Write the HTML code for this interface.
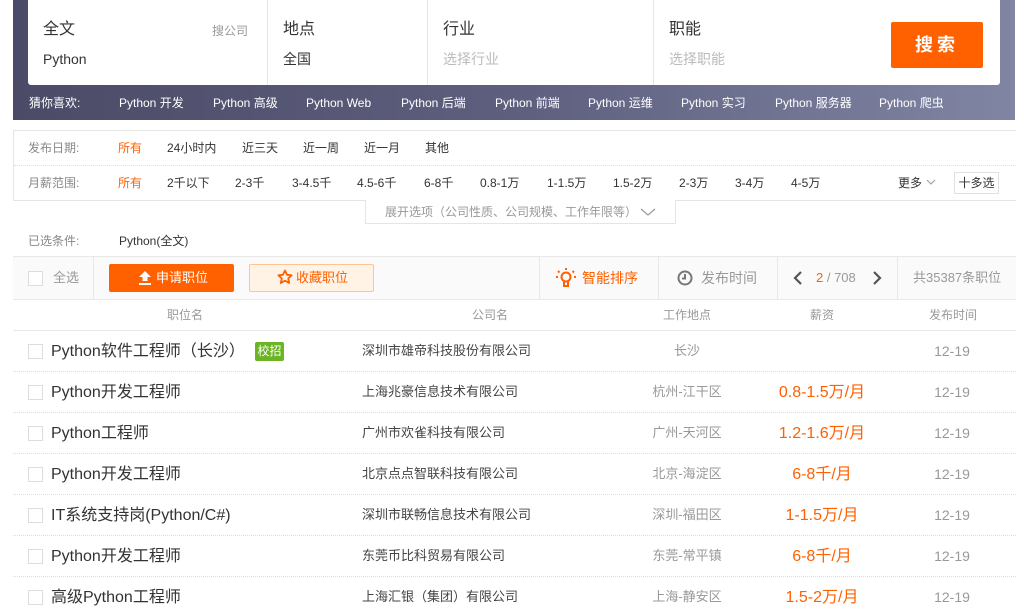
<!DOCTYPE html>
<html><head><meta charset="utf-8"><style>
*{margin:0;padding:0;box-sizing:border-box}
body{width:1024px;height:611px;overflow:hidden;background:#fff;position:relative;font-family:"Liberation Sans","Noto Sans CJK SC",sans-serif;color:#333}
.a{position:absolute;white-space:nowrap}
.hd{position:absolute;left:13px;top:0;width:1002px;height:120px;background:linear-gradient(90deg,#4b4b67 0%,#5e5f7e 50%,#8085a3 100%)}
.sb{position:absolute;left:28px;top:0;width:972px;height:85px;background:#fff;border-radius:0 0 3px 3px}
.vd{position:absolute;top:0;width:1px;height:85px;background:#e5e5e5}
.t1{font-size:16px;color:#333;line-height:20px}
.t2{font-size:14px;line-height:18px}
.rec{font-size:12px;color:#fff;line-height:16px;top:95px}
.f{font-size:12px;line-height:16px;color:#333}
.g{color:#888}
.o{color:#ff6000}
.cb{position:absolute;width:15px;height:15px;border:1px solid #ddd;background:#fff}
.n{font-size:16px;line-height:20px;color:#333}
.c{font-size:13px;color:#444;line-height:18px}
.loc{font-size:13px;color:#999;line-height:18px;text-align:center;width:120px}
.sal{font-size:16px;color:#ff6000;line-height:20px;text-align:center;width:140px}
.dt{font-size:14px;color:#999;line-height:18px;text-align:center;width:80px}
.dl{position:absolute;left:13px;width:1003px;border-top:1px dotted #ddd}
</style></head><body>
<div class="hd"></div>
<div class="sb">
<div class="vd" style="left:239px"></div><div class="vd" style="left:399px"></div><div class="vd" style="left:625px"></div>
</div>
<span class="a t1" style="left:43px;top:20px">全文</span>
<span class="a" style="left:212px;top:22px;font-size:12px;color:#999">搜公司</span>
<span class="a t2" style="left:43px;top:50px;color:#333">Python</span>
<span class="a t1" style="left:283px;top:20px">地点</span>
<span class="a t2" style="left:283px;top:50px;color:#333">全国</span>
<span class="a t1" style="left:443px;top:20px">行业</span>
<span class="a t2" style="left:443px;top:50px;color:#bbb">选择行业</span>
<span class="a t1" style="left:669px;top:20px">职能</span>
<span class="a t2" style="left:669px;top:50px;color:#bbb">选择职能</span>
<div class="a" style="left:891px;top:22px;width:92px;height:46px;background:#ff6000;border-radius:2px;color:#fff;font-size:18px;font-weight:bold;text-align:center;line-height:46px;letter-spacing:4px">搜索</div>
<span class="a rec" style="left:29px">猜你喜欢:</span>
<span class="a rec" style="left:119px">Python 开发</span>
<span class="a rec" style="left:213px">Python 高级</span>
<span class="a rec" style="left:306px">Python Web</span>
<span class="a rec" style="left:401px">Python 后端</span>
<span class="a rec" style="left:495px">Python 前端</span>
<span class="a rec" style="left:588px">Python 运维</span>
<span class="a rec" style="left:681px">Python 实习</span>
<span class="a rec" style="left:775px">Python 服务器</span>
<span class="a rec" style="left:879px">Python 爬虫</span>

<div class="a" style="left:13px;top:130px;width:1003px;height:71px;border:1px solid #e5e5e5;border-right:none"></div>
<div class="a" style="left:14px;top:165px;width:1002px;border-top:1px dotted #e0e0e0"></div>
<div class="a" style="left:365px;top:200px;width:311px;height:24px;border:1px solid #e5e5e5;border-top:none;background:#fff"></div>
<span class="a f" style="left:385px;top:204px;color:#999">展开选项（公司性质、公司规模、工作年限等）</span>
<svg class="a" style="left:640px;top:207px" width="16" height="10"><path d="M1 2l7 6 7-6" fill="none" stroke="#999" stroke-width="1.2"/></svg>
<span class="a f g" style="left:28px;top:140px">发布日期:</span>
<span class="a f o" style="left:118px;top:140px">所有</span>
<span class="a f" style="left:167px;top:140px">24小时内</span>
<span class="a f" style="left:242px;top:140px">近三天</span>
<span class="a f" style="left:303px;top:140px">近一周</span>
<span class="a f" style="left:364px;top:140px">近一月</span>
<span class="a f" style="left:425px;top:140px">其他</span>
<span class="a f g" style="left:28px;top:175px">月薪范围:</span>
<span class="a f o" style="left:118px;top:175px">所有</span>
<span class="a f" style="left:167px;top:175px">2千以下</span>
<span class="a f" style="left:235px;top:175px">2-3千</span>
<span class="a f" style="left:292px;top:175px">3-4.5千</span>
<span class="a f" style="left:357px;top:175px">4.5-6千</span>
<span class="a f" style="left:424px;top:175px">6-8千</span>
<span class="a f" style="left:480px;top:175px">0.8-1万</span>
<span class="a f" style="left:547px;top:175px">1-1.5万</span>
<span class="a f" style="left:613px;top:175px">1.5-2万</span>
<span class="a f" style="left:679px;top:175px">2-3万</span>
<span class="a f" style="left:735px;top:175px">3-4万</span>
<span class="a f" style="left:791px;top:175px">4-5万</span>
<span class="a f" style="left:898px;top:175px">更多</span>
<svg class="a" style="left:926px;top:179px" width="10" height="7"><path d="M1 1l4 4 4-4" fill="none" stroke="#999"/></svg>
<div class="a f" style="left:954px;top:172px;width:45px;height:22px;border:1px solid #e0e0e0;line-height:20px;text-align:center">十多选</div>
<span class="a f g" style="left:28px;top:233px">已选条件:</span>
<span class="a f" style="left:119px;top:233px">Python(全文)</span>

<div class="a" style="left:13px;top:256px;width:1003px;height:44px;background:#fafafa;border-top:1px solid #e8e8e8;border-bottom:1px solid #e8e8e8"></div>
<div class="a" style="left:93px;top:257px;width:1px;height:42px;background:#e8e8e8"></div>
<div class="a" style="left:539px;top:257px;width:1px;height:42px;background:#e8e8e8"></div>
<div class="a" style="left:658px;top:257px;width:1px;height:42px;background:#e8e8e8"></div>
<div class="a" style="left:777px;top:257px;width:1px;height:42px;background:#e8e8e8"></div>
<div class="a" style="left:897px;top:257px;width:1px;height:42px;background:#e8e8e8"></div>
<div class="cb" style="left:28px;top:271px"></div>
<span class="a f" style="left:53px;top:270px;color:#999;font-size:13px">全选</span>
<div class="a" style="left:109px;top:264px;width:125px;height:28px;background:#ff6000;border-radius:2px"></div>
<svg class="a" style="left:138px;top:270px" width="14" height="16"><path d="M7 1L1 7h3.5v4h5V7H13z" fill="#fff"/><rect x="1" y="13" width="12" height="2" fill="#fff"/></svg>
<span class="a" style="left:156px;top:270px;font-size:13px;color:#fff;line-height:16px">申请职位</span>
<div class="a" style="left:249px;top:264px;width:125px;height:28px;background:#fff3e6;border:1px solid #ffc48f;border-radius:2px"></div>
<svg class="a" style="left:277px;top:269px" width="16" height="16"><path d="M8 1.5l2 4.3 4.6.5-3.4 3.1 1 4.6L8 11.6 3.8 14l1-4.6L1.4 6.3 6 5.8z" fill="none" stroke="#ff6000" stroke-width="1.8" stroke-linejoin="round"/></svg>
<span class="a" style="left:296px;top:270px;font-size:13px;color:#ff6000;line-height:16px">收藏职位</span>
<svg class="a" style="left:555px;top:267px" width="22" height="22"><g stroke="#ff6000" stroke-width="2" fill="none"><circle cx="11" cy="10" r="4.5"/><path d="M9 15v4h4v-4M11 1v2M3 4l1.5 1.5M19 4l-1.5 1.5M1 10h2M19 10h2"/></g></svg>
<span class="a" style="left:582px;top:269px;font-size:14px;color:#ff6000;line-height:18px">智能排序</span>
<svg class="a" style="left:677px;top:270px" width="16" height="16"><circle cx="8" cy="8" r="6.5" fill="none" stroke="#777" stroke-width="2"/><path d="M8 4v4.5H5" fill="none" stroke="#777" stroke-width="2"/></svg>
<span class="a" style="left:701px;top:269px;font-size:14px;color:#999;line-height:18px">发布时间</span>
<svg class="a" style="left:793px;top:270px" width="10" height="16"><path d="M8 2L2 8l6 6" fill="none" stroke="#555" stroke-width="2.2"/></svg>
<span class="a" style="left:816px;top:270px;font-size:13px;color:#999;line-height:16px"><span class="o">2</span> / 708</span>
<svg class="a" style="left:872px;top:270px" width="10" height="16"><path d="M2 2l6 6-6 6" fill="none" stroke="#555" stroke-width="2.2"/></svg>
<span class="a" style="left:913px;top:270px;font-size:13px;color:#999;line-height:16px">共35387条职位</span>

<span class="a f g" style="left:167px;top:307px;color:#999">职位名</span>
<span class="a f g" style="left:472px;top:307px;color:#999">公司名</span>
<span class="a f g" style="left:663px;top:307px;color:#999">工作地点</span>
<span class="a f g" style="left:810px;top:307px;color:#999">薪资</span>
<span class="a f g" style="left:929px;top:307px;color:#999">发布时间</span>
<div class="a" style="left:13px;top:330px;width:1003px;border-top:1px solid #e8e8e8"></div>

<div class="cb" style="left:28px;top:344px"></div><span class="a n" style="left:51px;top:342px">Python软件工程师（长沙）</span>
<span class="a" style="left:255px;top:342px;width:29px;height:19px;background:#6bb423;color:#fff;font-size:12px;line-height:19px;text-align:center;border-radius:2px">校招</span>
<span class="a c" style="left:362px;top:342px">深圳市雄帝科技股份有限公司</span><span class="a loc" style="left:627px;top:342px">长沙</span><span class="a dt" style="left:912px;top:342px">12-19</span>
<div class="dl" style="top:371px"></div>

<div class="cb" style="left:28px;top:385px"></div><span class="a n" style="left:51px;top:383px">Python开发工程师</span>
<span class="a c" style="left:362px;top:383px">上海兆豪信息技术有限公司</span><span class="a loc" style="left:627px;top:383px">杭州-江干区</span><span class="a sal" style="left:752px;top:383px">0.8-1.5万/月</span><span class="a dt" style="left:912px;top:383px">12-19</span>
<div class="dl" style="top:412px"></div>

<div class="cb" style="left:28px;top:426px"></div><span class="a n" style="left:51px;top:424px">Python工程师</span>
<span class="a c" style="left:362px;top:424px">广州市欢雀科技有限公司</span><span class="a loc" style="left:627px;top:424px">广州-天河区</span><span class="a sal" style="left:752px;top:424px">1.2-1.6万/月</span><span class="a dt" style="left:912px;top:424px">12-19</span>
<div class="dl" style="top:453px"></div>

<div class="cb" style="left:28px;top:467px"></div><span class="a n" style="left:51px;top:465px">Python开发工程师</span>
<span class="a c" style="left:362px;top:465px">北京点点智联科技有限公司</span><span class="a loc" style="left:627px;top:465px">北京-海淀区</span><span class="a sal" style="left:752px;top:465px">6-8千/月</span><span class="a dt" style="left:912px;top:465px">12-19</span>
<div class="dl" style="top:494px"></div>

<div class="cb" style="left:28px;top:508px"></div><span class="a n" style="left:51px;top:506px">IT系统支持岗(Python/C#)</span>
<span class="a c" style="left:362px;top:506px">深圳市联畅信息技术有限公司</span><span class="a loc" style="left:627px;top:506px">深圳-福田区</span><span class="a sal" style="left:752px;top:506px">1-1.5万/月</span><span class="a dt" style="left:912px;top:506px">12-19</span>
<div class="dl" style="top:535px"></div>

<div class="cb" style="left:28px;top:549px"></div><span class="a n" style="left:51px;top:547px">Python开发工程师</span>
<span class="a c" style="left:362px;top:547px">东莞币比科贸易有限公司</span><span class="a loc" style="left:627px;top:547px">东莞-常平镇</span><span class="a sal" style="left:752px;top:547px">6-8千/月</span><span class="a dt" style="left:912px;top:547px">12-19</span>
<div class="dl" style="top:576px"></div>

<div class="cb" style="left:28px;top:590px"></div><span class="a n" style="left:51px;top:588px">高级Python工程师</span>
<span class="a c" style="left:362px;top:588px">上海汇银（集团）有限公司</span><span class="a loc" style="left:627px;top:588px">上海-静安区</span><span class="a sal" style="left:752px;top:588px">1.5-2万/月</span><span class="a dt" style="left:912px;top:588px">12-19</span>
</body></html>
